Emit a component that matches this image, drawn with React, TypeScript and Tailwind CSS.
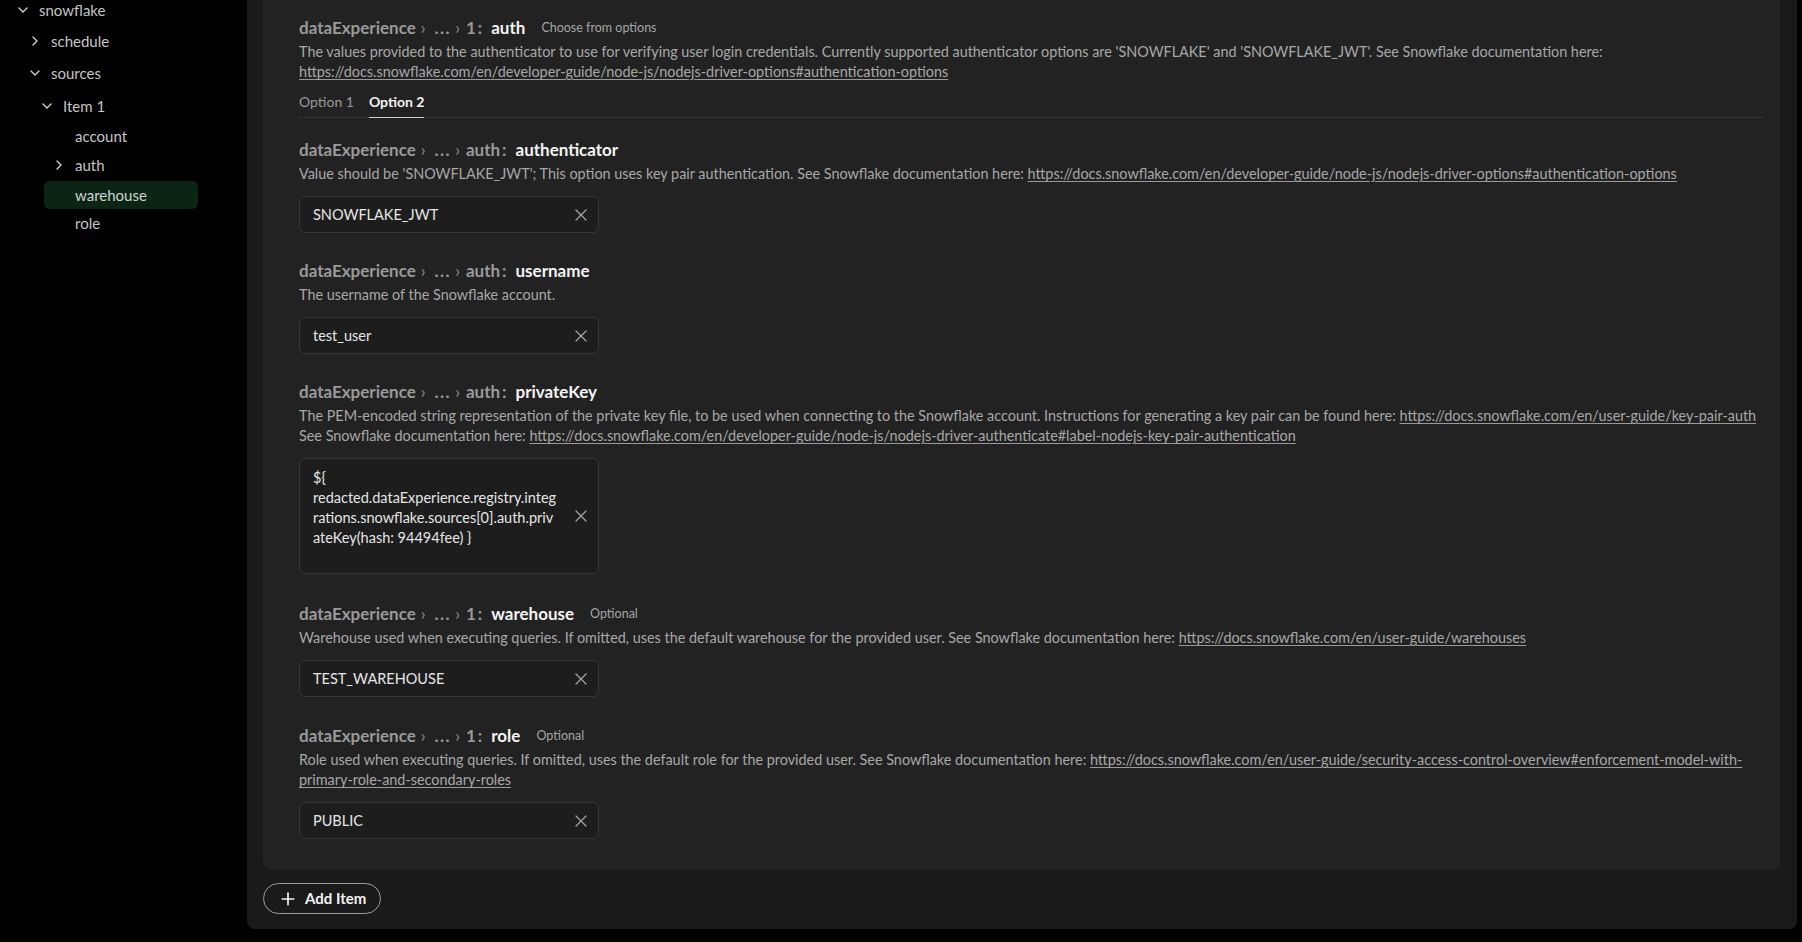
import type { FC, ReactNode } from "react";
import { ChevronDown, ChevronRight, Plus, X } from "lucide-react";

type TreeRow = {
  label: string;
  chev?: "down" | "right";
  indent: string;
  gap: string;
  active?: boolean;
};

const tree: TreeRow[] = [
  { label: "snowflake", chev: "down", indent: "ml-[8px]", gap: "mt-0" },
  { label: "schedule", chev: "right", indent: "ml-[20px]", gap: "mt-[3px]" },
  { label: "sources", chev: "down", indent: "ml-[20px]", gap: "mt-[4px]" },
  { label: "Item 1", chev: "down", indent: "ml-[32px]", gap: "mt-[5px]" },
  { label: "account", indent: "ml-[44px]", gap: "mt-[2px]" },
  { label: "auth", chev: "right", indent: "ml-[44px]", gap: "mt-[1px]" },
  { label: "warehouse", indent: "ml-[44px]", gap: "mt-[2px]", active: true },
  { label: "role", indent: "ml-[44px]", gap: "mt-0" },
];

const Sidebar: FC = () => (
  <aside className="w-[247px] shrink-0 bg-black">
    <div className="-mt-[4px] w-[198px]">
      {tree.map((row) => (
        <div
          key={row.label}
          className={`${row.indent} ${row.gap} flex h-7 items-center gap-2 rounded-md pl-[7px] text-[15px] ${
            row.active ? "bg-[#0b2514] text-[#cfd3cf]" : "text-[#c4c4c4]"
          }`}
        >
          <span className="flex w-4 justify-center text-[#cfcfcf]">
            {row.chev === "down" && <ChevronDown size={18} strokeWidth={2} />}
            {row.chev === "right" && <ChevronRight size={18} strokeWidth={2} />}
          </span>
          <span>{row.label}</span>
        </div>
      ))}
    </div>
  </aside>
);

type TitleProps = {
  parent: string;
  name: string;
  note?: string;
};

const Title: FC<TitleProps> = ({ parent, name, note }) => (
  <div className="flex h-6 items-center text-[17px] font-bold text-[#9a9a9a]">
    <span>dataExperience</span>
    <span className="ml-[5px] font-normal text-[#8c8c8c]">›</span>
    <span className="ml-[9px] tracking-[1.5px]">...</span>
    <span className="ml-[4px] font-normal text-[#8c8c8c]">›</span>
    <span className="ml-[6px]">{parent}</span>
    <span className="ml-[2px]">:</span>
    <span className="ml-[9px] text-[#f4f4f4]">{name}</span>
    {note && (
      <span className="ml-[16px] text-[12.5px] font-normal text-[#a6a6a6]">
        {note}
      </span>
    )}
  </div>
);

const Link: FC<{ children: ReactNode }> = ({ children }) => (
  <a className="underline decoration-[#9a9a9a] underline-offset-2">{children}</a>
);

const Desc: FC<{ children: ReactNode }> = ({ children }) => (
  <p className="mt-0.5 text-[14.4px] leading-5 text-[#a8a8a8]">{children}</p>
);

const Field: FC<{ value: string }> = ({ value }) => (
  <div className="mt-3 flex h-[37px] w-[300px] items-center justify-between rounded-md border border-[#373737] bg-[#1d1d1d] pl-[13px] pr-[7px] text-[14.5px] text-[#e6e6e6]">
    <span>{value}</span>
    <X size={20} strokeWidth={1.5} className="text-[#a4a4a4]" />
  </div>
);

const keyLines = [
  "${",
  "redacted.dataExperience.registry.integ",
  "rations.snowflake.sources[0].auth.priv",
  "ateKey(hash: 94494fee) }",
];

export default function App() {
  return (
    <div
      className="flex h-[942px] w-full overflow-hidden bg-black"
      style={{ fontFamily: "Lato, 'Noto Sans', sans-serif" }}
    >
      <Sidebar />
      <main className="flex h-[929px] w-[1550px] shrink-0 flex-col rounded-b-lg bg-[#1a1a1a] pl-4">
        <div className="w-[1517px] rounded-b-lg bg-[#222222] pb-[31px] pl-9 pr-4 pt-4">
          <Title parent="1" name="auth" note="Choose from options" />
          <Desc>
            The values provided to the authenticator to use for verifying user login credentials.
            Currently supported authenticator options are 'SNOWFLAKE' and 'SNOWFLAKE_JWT'. See
            Snowflake documentation here:{" "}
            <Link>
              https://docs.snowflake.com/en/developer-guide/node-js/nodejs-driver-options#authentication-options
            </Link>
          </Desc>
          <div className="mt-[10px] flex gap-[15px] border-b border-[#333333] text-[14px] leading-5">
            <span className="pb-[5px] text-[#9a9a9a]">Option 1</span>
            <span className="-mb-px border-b border-[#d0d0d0] pb-[5px] font-bold text-[#f4f4f4]">
              Option 2
            </span>
          </div>

          <div className="mt-5">
            <Title parent="auth" name="authenticator" />
            <Desc>
              Value should be 'SNOWFLAKE_JWT'; This option uses key pair authentication. See
              Snowflake documentation here:{" "}
              <Link>
                https://docs.snowflake.com/en/developer-guide/node-js/nodejs-driver-options#authentication-options
              </Link>
            </Desc>
            <Field value="SNOWFLAKE_JWT" />
          </div>

          <div className="mt-[26px]">
            <Title parent="auth" name="username" />
            <Desc>The username of the Snowflake account.</Desc>
            <Field value="test_user" />
          </div>

          <div className="mt-[26px]">
            <Title parent="auth" name="privateKey" />
            <Desc>
              <span className="whitespace-nowrap">
                The PEM-encoded string representation of the private key file, to be used when
                connecting to the Snowflake account. Instructions for generating a key pair can be
                found here: <Link>https://docs.snowflake.com/en/user-guide/key-pair-auth</Link>
              </span>
              <br />
              See Snowflake documentation here:{" "}
              <Link>
                https://docs.snowflake.com/en/developer-guide/node-js/nodejs-driver-authenticate#label-nodejs-key-pair-authentication
              </Link>
            </Desc>
            <div className="mt-3 flex h-[116px] w-[300px] items-center justify-between rounded-md border border-[#373737] bg-[#1d1d1d] pl-[13px] pr-[7px] text-[14.5px] text-[#e6e6e6]">
              <div className="self-start pt-[9px] leading-5">
                {keyLines.map((line) => (
                  <div key={line} className="whitespace-nowrap">
                    {line}
                  </div>
                ))}
              </div>
              <X size={20} strokeWidth={1.5} className="text-[#a4a4a4]" />
            </div>
          </div>

          <div className="mt-[28px]">
            <Title parent="1" name="warehouse" note="Optional" />
            <Desc>
              Warehouse used when executing queries. If omitted, uses the default warehouse for the
              provided user. See Snowflake documentation here:{" "}
              <Link>https://docs.snowflake.com/en/user-guide/warehouses</Link>
            </Desc>
            <Field value="TEST_WAREHOUSE" />
          </div>

          <div className="mt-[27px]">
            <Title parent="1" name="role" note="Optional" />
            <Desc>
              <span className="whitespace-nowrap">
                Role used when executing queries. If omitted, uses the default role for the provided
                user. See Snowflake documentation here:{" "}
                <Link>
                  https://docs.snowflake.com/en/user-guide/security-access-control-overview#enforcement-model-with-
                </Link>
              </span>
              <br />
              <Link>primary-role-and-secondary-roles</Link>
            </Desc>
            <Field value="PUBLIC" />
          </div>
        </div>

        <button className="mt-[13px] flex h-[31px] w-[118px] items-center gap-[7px] rounded-full border border-[#9c9c9c] pl-[14px] text-[15px] font-bold text-[#f4f4f4]">
          <Plus size={20} strokeWidth={2} />
          Add Item
        </button>
      </main>
    </div>
  );
}
